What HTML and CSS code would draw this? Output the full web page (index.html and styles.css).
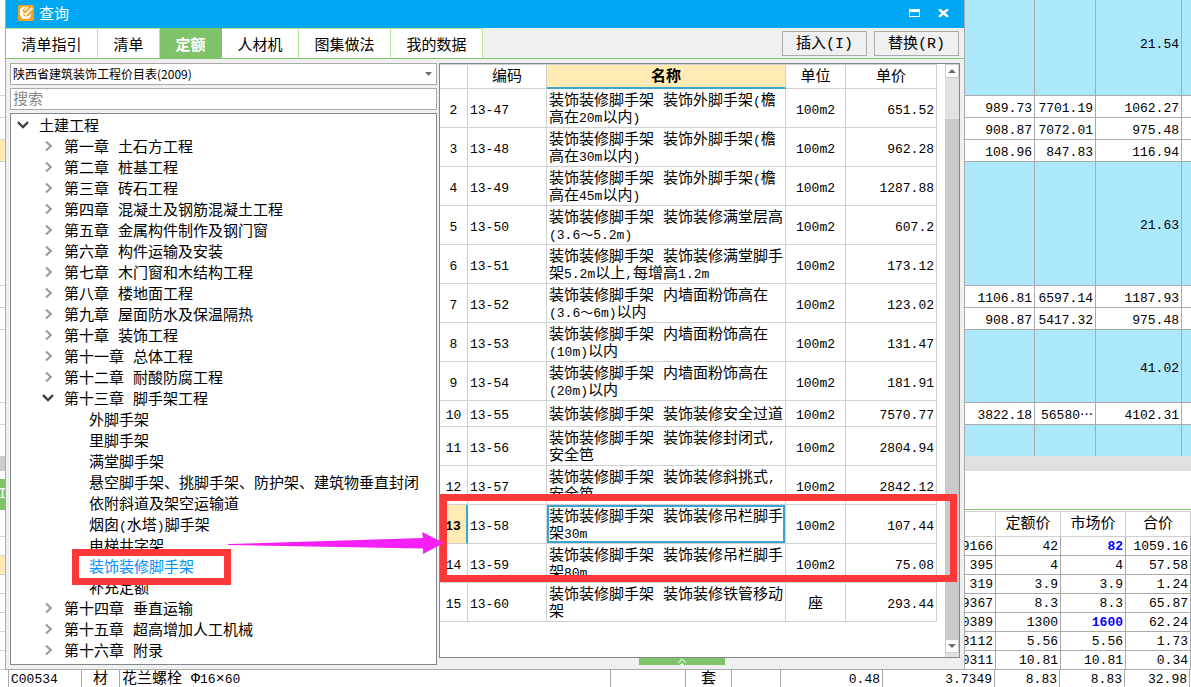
FILE: index.html
```html
<!DOCTYPE html>
<html lang="zh-CN">
<head>
<meta charset="utf-8">
<title>查询</title>
<link rel="stylesheet" href="styles.css">
</head>
<body>
<svg class="defs" aria-hidden="true">
  <symbol id="closed" viewBox="0 0 8 12"><path d="M1 1.5 5.8 6 1 10.5" fill="none" stroke="#9c9c9c" stroke-width="2.2"/></symbol>
  <symbol id="open" viewBox="0 0 12 8"><path d="M1 1.2 6 6 11 1.2" fill="none" stroke="#404040" stroke-width="2.4"/></symbol>
</svg>
<div class="workspace">
  <aside class="edge">
    <div class="slot tall"></div><div class="slot"></div><div class="slot"></div><div class="slot marked"></div>
    <div class="slot group"></div><div class="slot"></div><div class="slot"></div><div class="slot mid"></div><div class="slot"></div>
    <div class="gap-plain"></div><div class="gap-grey"></div><div class="gap-small"></div><div class="side-tab">I</div>
    <div class="slot head"></div><div class="slot short"></div><div class="slot short marked"></div><div class="slot short"></div><div class="slot short"></div><div class="slot short"></div><div class="slot short"></div><div class="slot short"></div>
  </aside>

  <main class="dialog">
    <header class="titlebar">
      <svg class="logo" viewBox="0 0 16 16"><rect width="16" height="16" rx="2" fill="#f9a11b"/><path d="M8.500 2C5 1 1.500 2.500 2 6.500c-.5 4 1 7.500 5.500 7.500 4 0 6-2 5.500-6-1 2-2.500 3.500-5 3.500C6 11.500 4.500 10 4.500 7c0-2.500 1.500-4 4-5z" fill="#fff"/><path d="M4.500 6 7 8.500 13.500 2 15 3.500 8 11 4 8z" fill="#fff4dc"/><path d="M6 5 9.500 1.500l1 1L7 6z" fill="#fff"/></svg>
      <h1>查询</h1>
      <button class="win" aria-label="最大化"><svg width="11" height="8" viewBox="0 0 11 8"><path d="M0 0h11v8H0zM1 3v4h9V3z" fill="#fff" fill-rule="evenodd"/></svg></button>
      <button class="win" aria-label="关闭"><svg width="11" height="8" viewBox="0 0 11 8"><path d="M1 0 10 8M10 0 1 8" stroke="#fff" stroke-width="2.4"/></svg></button>
    </header>
    <nav class="tabs">
      <button class="tab t4">清单指引</button><button class="tab t2">清单</button><button class="tab t2 active">定额</button><button class="tab t3">人材机</button><button class="tab t4">图集做法</button><button class="tab t4">我的数据</button>
      <div class="actions"><button>插入(I)</button><button>替换(R)</button></div>
    </nav>
    <div class="panes">
      <section class="left">
        <div class="combo">
          <select aria-label="价目表"><option>陕西省建筑装饰工程价目表(2009)</option></select>
          <svg width="7" height="4" viewBox="0 0 7 4"><path d="M0 0h7L3.500 4z" fill="#6b6f80"/></svg>
        </div>
        <input class="search" type="text" placeholder="搜索" aria-label="搜索">
        <ul class="tree">
          <li><svg class="open"><use href="#open"/></svg>土建工程</li>
          <li class="l1"><svg><use href="#closed"/></svg>第一章 土石方工程</li>
          <li class="l1"><svg><use href="#closed"/></svg>第二章 桩基工程</li>
          <li class="l1"><svg><use href="#closed"/></svg>第三章 砖石工程</li>
          <li class="l1"><svg><use href="#closed"/></svg>第四章 混凝土及钢筋混凝土工程</li>
          <li class="l1"><svg><use href="#closed"/></svg>第五章 金属构件制作及钢门窗</li>
          <li class="l1"><svg><use href="#closed"/></svg>第六章 构件运输及安装</li>
          <li class="l1"><svg><use href="#closed"/></svg>第七章 木门窗和木结构工程</li>
          <li class="l1"><svg><use href="#closed"/></svg>第八章 楼地面工程</li>
          <li class="l1"><svg><use href="#closed"/></svg>第九章 屋面防水及保温隔热</li>
          <li class="l1"><svg><use href="#closed"/></svg>第十章 装饰工程</li>
          <li class="l1"><svg><use href="#closed"/></svg>第十一章 总体工程</li>
          <li class="l1"><svg><use href="#closed"/></svg>第十二章 耐酸防腐工程</li>
          <li class="l1"><svg class="open"><use href="#open"/></svg>第十三章 脚手架工程</li>
          <li class="l2">外脚手架</li>
          <li class="l2">里脚手架</li>
          <li class="l2">满堂脚手架</li>
          <li class="l2">悬空脚手架、挑脚手架、防护架、建筑物垂直封闭</li>
          <li class="l2">依附斜道及架空运输道</li>
          <li class="l2">烟囱<span class="n">(</span>水塔<span class="n">)</span>脚手架</li>
          <li class="l2">电梯井字架</li>
          <li class="l2 chosen">装饰装修脚手架</li>
          <li class="l2">补充定额</li>
          <li class="l1"><svg><use href="#closed"/></svg>第十四章 垂直运输</li>
          <li class="l1"><svg><use href="#closed"/></svg>第十五章 超高增加人工机械</li>
          <li class="l1"><svg><use href="#closed"/></svg>第十六章 附录</li>
        </ul>
      </section>
      <section class="right">
        <div class="list">
          <table class="quota">
            <colgroup><col class="c-no"><col class="c-code"><col><col class="c-unit"><col class="c-price"></colgroup>
            <thead><tr><th></th><th>编码</th><th class="sorted">名称</th><th>单位</th><th>单价</th></tr></thead>
            <tbody>
              <tr><td>2</td><td>13-47</td><td>装饰装修脚手架 装饰外脚手架<span class="n">(</span>檐<br>高在<span class="n">20m</span>以内<span class="n">)</span></td><td>100m2</td><td>651.52</td></tr>
              <tr><td>3</td><td>13-48</td><td>装饰装修脚手架 装饰外脚手架<span class="n">(</span>檐<br>高在<span class="n">30m</span>以内<span class="n">)</span></td><td>100m2</td><td>962.28</td></tr>
              <tr><td>4</td><td>13-49</td><td>装饰装修脚手架 装饰外脚手架<span class="n">(</span>檐<br>高在<span class="n">45m</span>以内<span class="n">)</span></td><td>100m2</td><td>1287.88</td></tr>
              <tr><td>5</td><td>13-50</td><td>装饰装修脚手架 装饰装修满堂层高<br><span class="n">(3.6～5.2m)</span></td><td>100m2</td><td>607.2</td></tr>
              <tr><td>6</td><td>13-51</td><td>装饰装修脚手架 装饰装修满堂脚手<br>架<span class="n">5.2m</span>以上<span class="n">,</span>每增高<span class="n">1.2m</span></td><td>100m2</td><td>173.12</td></tr>
              <tr><td>7</td><td>13-52</td><td>装饰装修脚手架 内墙面粉饰高在<br><span class="n">(3.6～6m)</span>以内</td><td>100m2</td><td>123.02</td></tr>
              <tr><td>8</td><td>13-53</td><td>装饰装修脚手架 内墙面粉饰高在<br><span class="n">(10m)</span>以内</td><td>100m2</td><td>131.47</td></tr>
              <tr><td>9</td><td>13-54</td><td>装饰装修脚手架 内墙面粉饰高在<br><span class="n">(20m)</span>以内</td><td>100m2</td><td>181.91</td></tr>
              <tr class="single"><td>10</td><td>13-55</td><td>装饰装修脚手架 装饰装修安全过道</td><td>100m2</td><td>7570.77</td></tr>
              <tr><td>11</td><td>13-56</td><td>装饰装修脚手架 装饰装修封闭式<span class="n">,</span><br>安全笆</td><td>100m2</td><td>2804.94</td></tr>
              <tr><td>12</td><td>13-57</td><td>装饰装修脚手架 装饰装修斜挑式<span class="n">,</span><br>安全笆</td><td>100m2</td><td>2842.12</td></tr>
              <tr class="current"><td>13</td><td>13-58</td><td>装饰装修脚手架 装饰装修吊栏脚手<br>架<span class="n">30m</span></td><td>100m2</td><td>107.44</td></tr>
              <tr><td>14</td><td>13-59</td><td>装饰装修脚手架 装饰装修吊栏脚手<br>架<span class="n">80m</span></td><td>100m2</td><td>75.08</td></tr>
              <tr><td>15</td><td>13-60</td><td>装饰装修脚手架 装饰装修铁管移动<br>架</td><td class="cjk">座</td><td>293.44</td></tr>
            </tbody>
          </table>
          <div class="scroll">
            <button aria-label="向上滚动"><svg width="8" height="4" viewBox="0 0 8 4"><path d="M0 4h8L4 0z" fill="#6b6e7a"/></svg></button>
            <div class="track"><div class="thumb"></div></div>
            <button aria-label="向下滚动"><svg width="8" height="4" viewBox="0 0 8 4"><path d="M0 0h8L4 4z" fill="#6b6e7a"/></svg></button>
          </div>
        </div>
        <button class="fold" aria-label="展开"><svg width="10" height="7" viewBox="0 0 10 7"><path d="M1 5 5 1l4 4" fill="none" stroke="#cdeec2" stroke-width="1.5"/><path d="M3 7 5 5l2 2z" fill="#fff"/></svg></button>
      </section>
    </div>
    <div class="mark mark-tree"></div>
    <div class="mark mark-rows"></div>
    <svg class="arrow" viewBox="0 0 216 22"><path d="M0 12 195 6 194 0 216 11 195 22V16.500L0 13z" fill="#f520f5"/></svg>
  </main>

  <aside class="sheets">
    <table class="sheet">
      <colgroup><col class="s1"><col class="s2"><col class="s3"><col></colgroup>
      <tbody>
        <tr class="blue h96"><td></td><td></td><td>21.54</td><td></td></tr>
        <tr><td>989.73</td><td>7701.19</td><td>1062.27</td><td></td></tr>
        <tr><td>908.87</td><td>7072.01</td><td>975.48</td><td></td></tr>
        <tr><td>108.96</td><td>847.83</td><td>116.94</td><td></td></tr>
        <tr class="blue h124"><td></td><td></td><td>21.63</td><td></td></tr>
        <tr><td>1106.81</td><td>6597.14</td><td>1187.93</td><td></td></tr>
        <tr><td>908.87</td><td>5417.32</td><td>975.48</td><td></td></tr>
        <tr class="blue h73"><td></td><td></td><td>41.02</td><td></td></tr>
        <tr><td>3822.18</td><td>56580⋯</td><td>4102.31</td><td></td></tr>
        <tr class="blue h31"><td></td><td></td><td></td><td></td></tr>
      </tbody>
    </table>
    <div class="splitter"></div>
    <div class="blank"></div>
    <table class="sheet prices">
      <colgroup><col class="p0"><col class="p1"><col class="p1"><col class="p1"><col></colgroup>
      <thead><tr><th></th><th>定额价</th><th>市场价</th><th>合价</th><th></th></tr></thead>
      <tbody>
        <tr><td><div class="cut">9166</div></td><td>42</td><td class="changed">82</td><td>1059.16</td><td></td></tr>
        <tr><td><div class="cut">395</div></td><td>4</td><td>4</td><td>57.58</td><td></td></tr>
        <tr><td><div class="cut">319</div></td><td>3.9</td><td>3.9</td><td>1.24</td><td></td></tr>
        <tr><td><div class="cut">9367</div></td><td>8.3</td><td>8.3</td><td>65.87</td><td></td></tr>
        <tr><td><div class="cut">0389</div></td><td>1300</td><td class="changed">1600</td><td>62.24</td><td></td></tr>
        <tr><td><div class="cut">3112</div></td><td>5.56</td><td>5.56</td><td>1.73</td><td></td></tr>
        <tr><td><div class="cut">0311</div></td><td>10.81</td><td>10.81</td><td>0.34</td><td></td></tr>
      </tbody>
    </table>
  </aside>
</div>
<table class="sheet last">
  <colgroup><col class="b0"><col class="b1"><col class="b2"><col><col class="b4"><col class="b5"><col class="b6"><col class="b7"><col class="b8"><col class="p1"><col class="p1"><col class="p1"><col class="b9"></colgroup>
  <tbody><tr><td></td><td class="start">C00534</td><td class="mid cjk">材</td><td class="start cjk">花兰螺栓 Φ<span class="n">16</span>×<span class="n">60</span></td><td></td><td class="mid cjk">套</td><td></td><td>0.48</td><td>3.7349</td><td>8.83</td><td>8.83</td><td>32.98</td><td></td></tr></tbody>
</table>
</body>
</html>
```

FILE: styles.css
```css
* { box-sizing: border-box; }
body {
  margin: 0;
  height: 100vh;
  overflow: hidden;
  background: #fff;
  color: #000;
  font: 15px/17px "Liberation Mono", "Noto Sans CJK SC", monospace;
}
button, input, select { font: inherit; color: inherit; margin: 0; padding: 0; border: 0; border-radius: 0; background: none; }
.defs { display: none; }
.n { font-size: 13px; line-height: 1; }
.workspace { display: grid; grid-template-columns: 5px minmax(0, 1fr) 226px; }

/* left edge of the sheet behind the dialog */
.edge { overflow: hidden; }
.slot { height: 22px; border-bottom: 1px solid #d0d0d0; }
.slot.tall { height: 96px; }
.slot.group { height: 124px; }
.slot.mid { height: 73px; }
.slot.head { height: 27px; }
.slot.short { height: 19px; }
.slot.marked { background: #ffebb3; }
.gap-plain { height: 31px; }
.gap-grey { height: 15px; background: #ccc; }
.gap-small { height: 8px; }
.side-tab { height: 31px; display: flex; justify-content: center; align-items: center; background: #7fc36a; color: #fff; }

/* dialog */
.dialog { position: relative; display: flex; flex-direction: column; border: 1px solid #aaa; border-top: 0; background: #f0f0f0; }
.titlebar { display: flex; align-items: center; height: 28px; padding: 0 15px 3px 12px; background: #00a8f3; color: #fff; }
.logo { width: 16px; height: 16px; }
.titlebar h1 { flex: 1; margin: 5px 0 0 5px; font-size: 15px; font-weight: 400; line-height: 17px; }
.win { display: flex; align-items: center; height: 20px; }
.win + .win { margin-left: 18px; }
.tabs { display: flex; height: 31px; border-bottom: 1px solid #7fc36a; }
.tab { border-top: 1px solid #b6e89b; border-right: 1px solid #b6e89b; background: #fff; padding-top: 5px; }
.t2 { width: 62px; }
.t3 { width: 77px; }
.t4 { width: 92px; }
.tab.active { background: #7fc36a; border-color: #7fc36a; color: #fff; font-weight: 700; }
.actions { flex: 1; display: flex; justify-content: flex-end; gap: 7px; padding: 3px 5px 2px 0; }
.actions button { width: 85px; padding-top: 2px; border: 1px solid #aaa; }
.panes { flex: 1; display: grid; grid-template-columns: 427px minmax(0, 1fr); gap: 2px; padding: 4px; }
.left { display: flex; flex-direction: column; }
.combo { display: flex; align-items: center; height: 22px; padding-right: 4px; border: 1px solid #aaa; background: #fff; }
.combo select { flex: 1; height: 20px; padding-left: 2px; appearance: none; font: 12px/18px "Noto Sans CJK SC", sans-serif; }
.search { height: 22px; margin: 3px 0; padding: 2px 2px 0; border: 1px solid #aaa; background: #fff; }
.search::placeholder { color: #888; opacity: 1; }
.tree { flex: 1; margin: 0; padding: 2px 0; list-style: none; border: 1px solid #828790; background: #fff; }
.tree li { display: flex; align-items: center; height: 21px; padding: 2px 0 0 6px; white-space: pre; }
.tree svg { width: 8px; height: 12px; margin-right: 11px; margin-bottom: 5px; }
.tree svg.open { width: 12px; height: 8px; margin-right: 10px; }
.tree .l1 { padding-left: 34px; }
.tree .l1 .open { margin-left: -3px; }
.tree .l2 { padding-left: 78px; }
.tree .chosen { color: #0090ff; }

.right { display: flex; flex-direction: column; align-items: center; }
.list { align-self: stretch; display: flex; justify-content: space-between; height: 595px; border: 1px solid #828790; background: #fff; }
.quota { flex: 1; align-self: flex-start; margin-right: 8px; table-layout: fixed; border-spacing: 0; width: 100%; }
.quota .c-no { width: 28px; }
.quota .c-code { width: 79px; }
.quota .c-unit { width: 60px; }
.quota .c-price { width: 91px; }
.quota th { height: 25px; padding: 2px 0 0; font-weight: 400; border: solid #d0d0d0; border-width: 1px 1px 1px 0; }
.quota .sorted { font-weight: 700; background: #ffebb3; border-bottom: 2px solid #3ba5cf; }
.quota td { height: 39px; padding: 4px 2px 0; border: solid #d0d0d0; border-width: 0 1px 1px 0; font-size: 13px; white-space: nowrap; text-align: center; }
.quota td:nth-child(2) { text-align: left; }
.quota td:nth-child(3) { font-size: 15px; text-align: left; }
.quota td:nth-child(5) { text-align: right; }
.quota td.cjk, .sheet td.cjk { font-size: 15px; }
.quota .single td { height: 26px; }
.quota .current td:first-child { background: #ffebb3; border-right: 2px solid #3ba5cf; font-weight: 700; }
.quota .current td:nth-child(3) { box-shadow: inset 0 0 0 2px #3ba5cf; }
.scroll { width: 14px; display: flex; flex-direction: column; padding-bottom: 4px; background: #e2e2e2; }
.scroll button { display: flex; align-items: center; justify-content: center; height: 14px; border: 1px solid #ccc; background: #fff; }
.track { flex: 1; padding-top: 41px; }
.thumb { height: 100%; background: #cacaca; }
.fold { display: flex; align-items: center; justify-content: center; width: 86px; height: 7px; background: #7fc36a; margin-right: 36px; }

/* call-outs over the dialog */
.mark { position: absolute; border: 7px solid #fc3838; }
.mark-tree { left: 66px; top: 549px; width: 159px; height: 36px; }
.mark-rows { left: 434px; right: 7px; top: 494px; height: 88px; }
.arrow { position: absolute; left: 222px; top: 532px; width: 216px; height: 22px; }

/* sheets behind the dialog */
.sheet { width: 100%; table-layout: fixed; border-spacing: 0; font-size: 13px; }
.sheet td { height: 22px; padding: 4px 2px 0 0; border: solid #aaa; border-width: 0 1px 1px 0; text-align: right; white-space: nowrap; }
.sheet .blue td { background: #ace8fb; padding: 0 2px 6px 0; }
.sheet .h96 td { height: 96px; }
.sheet .h124 td { height: 124px; padding: 4px 2px 0 0; }
.sheet .h73 td { height: 73px; padding: 4px 2px 0 0; }
.sheet .h31 td { height: 31px; border-bottom: 0; }
.sheet td:last-child, .sheet th:last-child { border-right: 0; padding-right: 0; }
.s1 { width: 70px; }
.s2 { width: 61px; }
.s3 { width: 86px; }
.splitter { height: 15px; background: #e0e0e0; }
.blank { height: 39px; border-bottom: 1px solid #7fc36a; margin-bottom: 1px; }
.prices th { height: 26px; padding: 0; font-size: 15px; font-weight: 400; border: 1px solid #d0d0d0; border-left: 0; }
.prices td { height: 19px; padding-top: 1px; }
.p0 { width: 31px; }
.p1 { width: 65px; }
.changed { color: #00f; font-weight: 700; }
.cut { display: flex; justify-content: flex-end; overflow: hidden; }
.last td { height: 19px; padding-top: 1px; }
.last .start { text-align: left; padding-left: 2px; }
.last .mid { text-align: center; padding-right: 0; }
.b0 { width: 9px; }
.b1 { width: 73px; }
.b2 { width: 38px; }
.b4 { width: 75px; }
.b5 { width: 46px; }
.b6 { width: 49px; }
.b7 { width: 102px; }
.b8 { width: 112px; }
.b9 { width: 1px; }
```
